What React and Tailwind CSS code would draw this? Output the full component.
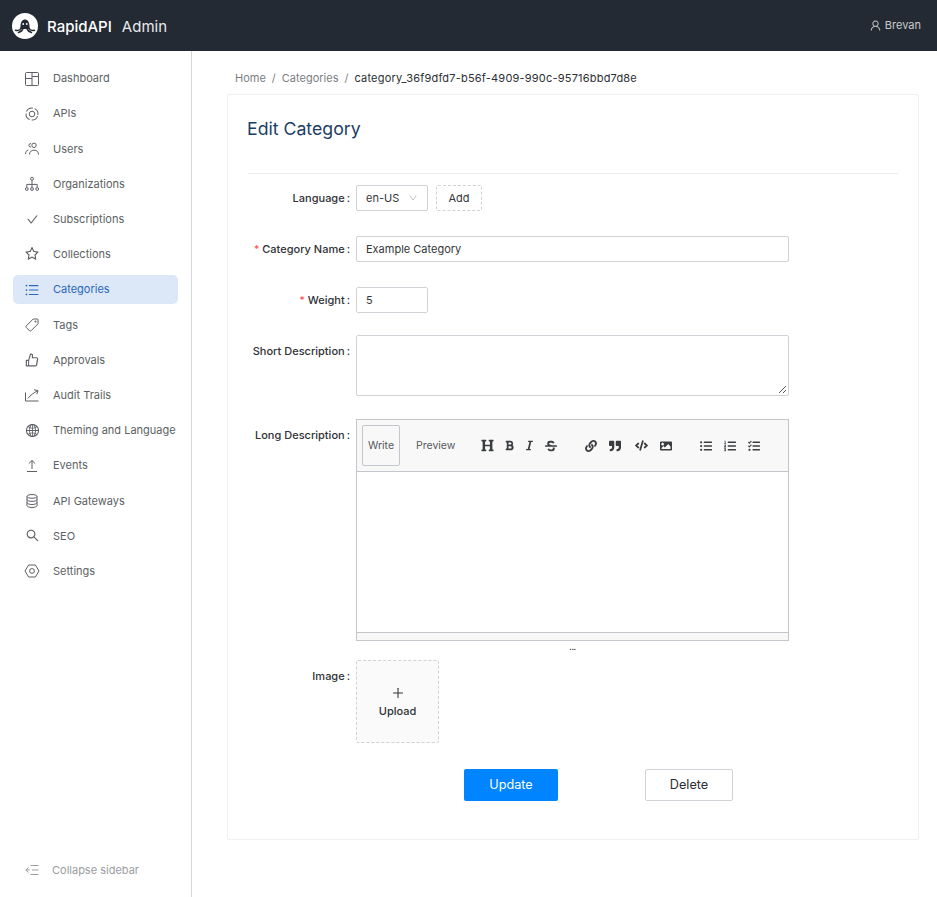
import { AiOutlineUser, AiOutlineCheck, AiOutlineStar, AiOutlineUnorderedList, AiOutlineLike, AiOutlineGlobal, AiOutlineSearch, AiOutlineDown, AiOutlinePlus } from 'react-icons/ai'
import { FaHeading, FaBold, FaItalic, FaStrikethrough, FaLink, FaQuoteRight, FaCode, FaImage, FaListUl, FaListOl, FaTasks } from 'react-icons/fa'

const Svg = ({ children, size = 16 }) => (
  <svg width={size} height={size} viewBox="0 0 16 16" fill="none" stroke="currentColor" strokeWidth="1">{children}</svg>
)

const DashboardIcon = () => (
  <Svg><rect x="1.500" y="1.500" width="13" height="13" rx="1" /><path d="M1.500 7.500h6.500M8 1.500v13M8 5.500h6.500" /></Svg>
)
const ApisIcon = () => (
  <Svg>
    <circle cx="8" cy="8" r="2.800" />
    <circle cx="8" cy="8" r="6" strokeDasharray="7.400 2" transform="rotate(20 8 8)" />
  </Svg>
)
const UsersIcon = () => (
  <Svg>
    <circle cx="10" cy="4.300" r="2.200" />
    <path d="M7 2.500A2.200 2.200 0 0 0 4.800 4.300 2.200 2.200 0 0 0 7 6.100M5.500 13.500c0-2.800 1.800-4.300 4.500-4.300s4.500 1.500 4.500 4.300M1.500 13c0-2.200 1-3.500 2.800-3.900" />
  </Svg>
)
const OrgIcon = () => (
  <Svg>
    <circle cx="8" cy="2.800" r="1.500" /><circle cx="2.800" cy="13" r="1.400" /><circle cx="8" cy="13" r="1.400" /><circle cx="13.200" cy="13" r="1.400" />
    <path d="M8 4.300v7.300M2.800 11.600V8.400h10.400v3.200" />
  </Svg>
)
const TagIcon = () => (
  <Svg>
    <path d="M9.200 2h4.300a.5.5 0 0 1 .5.5v4.300L7 13.800a1 1 0 0 1-1.400 0L2.200 10.400a1 1 0 0 1 0-1.400z" />
    <circle cx="11.500" cy="4.500" r=".6" />
  </Svg>
)
const TrailIcon = () => (
  <Svg><path d="M1.500 5.500v8.500h13M3.800 11.500C6.500 8 9.500 6 14 3.500M10 2.800l4 .7-1.200 3.800" /></Svg>
)
const EventsIcon = () => (
  <Svg><path d="M3 13.500h10M8 11V2.500M4.800 5.600 8 2.500l3.200 3.100" /></Svg>
)
const DbIcon = () => (
  <Svg>
    <ellipse cx="8" cy="3.400" rx="5" ry="1.900" />
    <path d="M3 3.400v9.200c0 1 2.200 1.900 5 1.900s5-.9 5-1.900V3.400M3 6.500c0 1 2.200 1.900 5 1.900s5-.9 5-1.900M3 9.600c0 1 2.200 1.900 5 1.900s5-.9 5-1.900" />
  </Svg>
)
const SettingsIcon = () => (
  <Svg>
    <path d="M4.600 2h6.800L15 8l-3.600 6H4.600L1 8z" strokeLinejoin="round" />
    <circle cx="8" cy="8" r="2.400" />
  </Svg>
)
const CollapseIcon = () => (
  <Svg><path d="M6.500 3.500h8M8 8h6.500M6.500 12.500h8M4.500 5.500 1.800 8l2.700 2.500M1.800 8h4" /></Svg>
)

const navItems = [
  { label: 'Dashboard', icon: <DashboardIcon /> },
  { label: 'APIs', icon: <ApisIcon /> },
  { label: 'Users', icon: <UsersIcon /> },
  { label: 'Organizations', icon: <OrgIcon /> },
  { label: 'Subscriptions', icon: <AiOutlineCheck size={13} /> },
  { label: 'Collections', icon: <AiOutlineStar size={16} /> },
  { label: 'Categories', icon: <AiOutlineUnorderedList size={16} />, active: true },
  { label: 'Tags', icon: <TagIcon /> },
  { label: 'Approvals', icon: <AiOutlineLike size={16} /> },
  { label: 'Audit Trails', icon: <TrailIcon /> },
  { label: 'Theming and Language', icon: <AiOutlineGlobal size={15} /> },
  { label: 'Events', icon: <EventsIcon /> },
  { label: 'API Gateways', icon: <DbIcon /> },
  { label: 'SEO', icon: <AiOutlineSearch size={15} /> },
  { label: 'Settings', icon: <SettingsIcon /> },
]

function Logo() {
  return (
    <svg width="26" height="26" viewBox="0 0 26 26">
      <circle cx="13" cy="13" r="13" fill="#fff" />
      <path d="M8.500 13c0-3.800 2-6.500 4.500-6.500s4.500 2.700 4.500 6.500c0 1.500.3 2.400 1 3H7.500c.7-.6 1-1.500 1-3z" fill="#242a33" />
      <path d="M9 15.500c-.8 1.600-2.600 2.300-5.500 1.800M11 15.500c-.6 2-2 3.400-4.500 4M15 15.500c.6 2 2 3.400 4.500 4M17 15.500c.8 1.600 2.600 2.300 5.500 1.800" fill="none" stroke="#242a33" strokeWidth="1.500" strokeLinecap="round" />
      <circle cx="11.200" cy="11" r=".9" fill="#fff" />
      <circle cx="14.800" cy="11" r=".9" fill="#fff" />
    </svg>
  )
}

function Header() {
  return (
    <div className="h-[51px] shrink-0 bg-[#242a33] flex items-center justify-between pl-3 pr-4">
      <div className="flex items-center">
        <Logo />
        <span className="ml-[9px] mt-[3px] text-[15px] font-medium text-white">RapidAPI</span>
        <span className="ml-[10px] mt-[3px] text-[15px] text-[#e8e9eb]">Admin</span>
      </div>
      <div className="flex items-center gap-[3px] text-[11px] text-[#c8cacd]">
        <AiOutlineUser size={13} />
        <span>Brevan</span>
      </div>
    </div>
  )
}

function Sidebar() {
  return (
    <aside className="w-[192px] shrink-0 border-r border-[#d4d6d9] flex flex-col justify-between">
      <nav className="pt-[13px] pl-[13px] pr-[13px] flex flex-col gap-[6.200px]">
        {navItems.map(item => (
          <div
            key={item.label}
            className={`h-[29px] rounded-[5px] pl-[11px] flex items-center ${item.active ? 'bg-[#dce8f8] text-[#2b66b8]' : 'text-[#5c5f64]'}`}
          >
            <span className="w-[16px] flex justify-center shrink-0">{item.icon}</span>
            <span className="ml-[13px] text-[11px] whitespace-nowrap">{item.label}</span>
          </div>
        ))}
      </nav>
      <div className="pl-[24px] pb-[19px] flex items-center text-[#9a9ca0]">
        <span className="w-[16px] flex justify-center"><CollapseIcon /></span>
        <span className="ml-[12px] text-[11px]">Collapse sidebar</span>
      </div>
    </aside>
  )
}

function Row({ label, required, tall, className = '', children }) {
  return (
    <div className={`flex items-start ${className}`}>
      <label className={`w-[103px] shrink-0 flex items-center justify-end text-[11px] font-[450] text-[#2f3237] whitespace-nowrap ${tall ? 'h-[32px]' : 'h-[26px]'}`}>
        {required && <span className="text-[#ff4d4f] mr-[3px] text-[10px]">*</span>}
        {label}<span className="ml-[2px]">:</span>
      </label>
      <div className="ml-[6px]">{children}</div>
    </div>
  )
}

const inputClass = 'h-[26px] border border-[#cfd2d6] rounded-[2px] px-[9px] flex items-center text-[11px] text-[#33363a]'

function ToolIcon({ icon: Icon, size = 12, className = '' }) {
  return (
    <span className={`w-[20px] flex justify-center items-center text-[#3a3d40] ${className}`}><Icon size={size} /></span>
  )
}

function Editor() {
  return (
    <div className="w-[433px] h-[222px] border border-[#c3c7cb] flex flex-col">
      <div className="h-[52px] shrink-0 bg-[#f8f8f8] border-b border-[#c3c7cb] flex items-center pl-[5px]">
        <div className="w-[38px] h-[41px] border border-[#c3c7cb] rounded-[2px] flex items-center justify-center text-[10.500px] text-[#55585c]">Write</div>
        <span className="ml-[16px] w-[40px] text-[10.500px] text-[#55585c] whitespace-nowrap">Preview</span>
        <ToolIcon icon={FaHeading} size={13} className="ml-[21px]" />
        <ToolIcon icon={FaBold} size={11} className="ml-[2px]" />
        <ToolIcon icon={FaItalic} size={11} />
        <ToolIcon icon={FaStrikethrough} className="ml-[2px]" />
        <ToolIcon icon={FaLink} className="ml-[20px]" />
        <ToolIcon icon={FaQuoteRight} className="ml-[4px]" />
        <ToolIcon icon={FaCode} size={13} className="ml-[6px]" />
        <ToolIcon icon={FaImage} className="ml-[5px]" />
        <ToolIcon icon={FaListUl} className="ml-[20px]" />
        <ToolIcon icon={FaListOl} className="ml-[4px]" />
        <ToolIcon icon={FaTasks} className="ml-[4px]" />
      </div>
      <div className="flex-1 bg-white" />
      <div className="h-[8px] shrink-0 bg-[#f8f8f8] border-t border-[#c3c7cb]" />
    </div>
  )
}

function Card() {
  return (
    <div className="border border-[#eeeff1] rounded-[2px] bg-white h-[746px] pl-[19px] pr-[20px]">
      <h1 className="mt-[23px] text-[17.700px] leading-[22px] font-normal text-[#1c3d66]">Edit Category</h1>
      <div className="mt-[33px] ml-[1px] border-t border-[#e8e9eb] w-[650px]" />
      <Row label="Language" className="mt-[11px]">
        <div className="flex gap-[8px]">
          <div className={`${inputClass} w-[72px] justify-between`}>
            <span>en-US</span>
            <AiOutlineDown size={10} className="text-[#b5b7ba]" />
          </div>
          <div className="w-[46px] h-[26px] border border-dashed border-[#cfd2d6] rounded-[2px] flex items-center justify-center text-[11px] text-[#33363a]">Add</div>
        </div>
      </Row>
      <Row label="Category Name" required className="mt-[25px]">
        <div className={`${inputClass} w-[433px]`}>Example Category</div>
      </Row>
      <Row label="Weight" required className="mt-[25px]">
        <div className={`${inputClass} w-[72px]`}>5</div>
      </Row>
      <Row label="Short Description" tall className="mt-[22px]">
        <div className="w-[433px] h-[61px] border border-[#cfd2d6] rounded-[2px] relative">
          <svg className="absolute right-[1px] bottom-[1px]" width="9" height="9" viewBox="0 0 9 9" stroke="#555" strokeWidth="1"><path d="M1 8 8 1M5 8l3-3" /></svg>
        </div>
      </Row>
      <Row label="Long Description" tall className="mt-[23px]">
        <Editor />
        <div className="h-[19px] flex justify-center items-center text-[9px] leading-none text-[#333] pb-[8px] tracking-tighter">...</div>
      </Row>
      <Row label="Image" tall>
        <div className="w-[83px] h-[83px] border border-dashed border-[#cfd2d6] rounded-[2px] bg-[#fafafa] flex flex-col items-center justify-center pt-[3px] text-[#2f3237]">
          <AiOutlinePlus size={14} />
          <span className="mt-[3px] text-[11px] font-[450]">Upload</span>
        </div>
      </Row>
      <div className="mt-[26px] ml-[217px] flex gap-[87px]">
        <button className="w-[94px] h-[32px] bg-[#0084ff] rounded-[2px] text-white text-[12.700px] font-normal">Update</button>
        <button className="w-[88px] h-[32px] border border-[#cfd2d6] rounded-[2px] text-[#2a2d31] text-[12.700px] font-normal">Delete</button>
      </div>
    </div>
  )
}

export default function App() {
  return (
    <div className="w-[937px] h-[897px] flex flex-col bg-white overflow-hidden font-['Inter',sans-serif]">
      <Header />
      <div className="flex-1 flex min-h-0">
        <Sidebar />
        <main className="flex-1 pl-[35px] pr-[19px]">
          <div className="h-[43px] pt-[12px] pl-[8px] flex items-center text-[11px] text-[#7b7e83]">
            <span>Home</span>
            <span className="mx-[6px]">/</span>
            <span>Categories</span>
            <span className="mx-[6px]">/</span>
            <span className="text-[#2c2f33] tracking-[0.2px]">category_36f9dfd7-b56f-4909-990c-95716bbd7d8e</span>
          </div>
          <Card />
        </main>
      </div>
    </div>
  )
}
